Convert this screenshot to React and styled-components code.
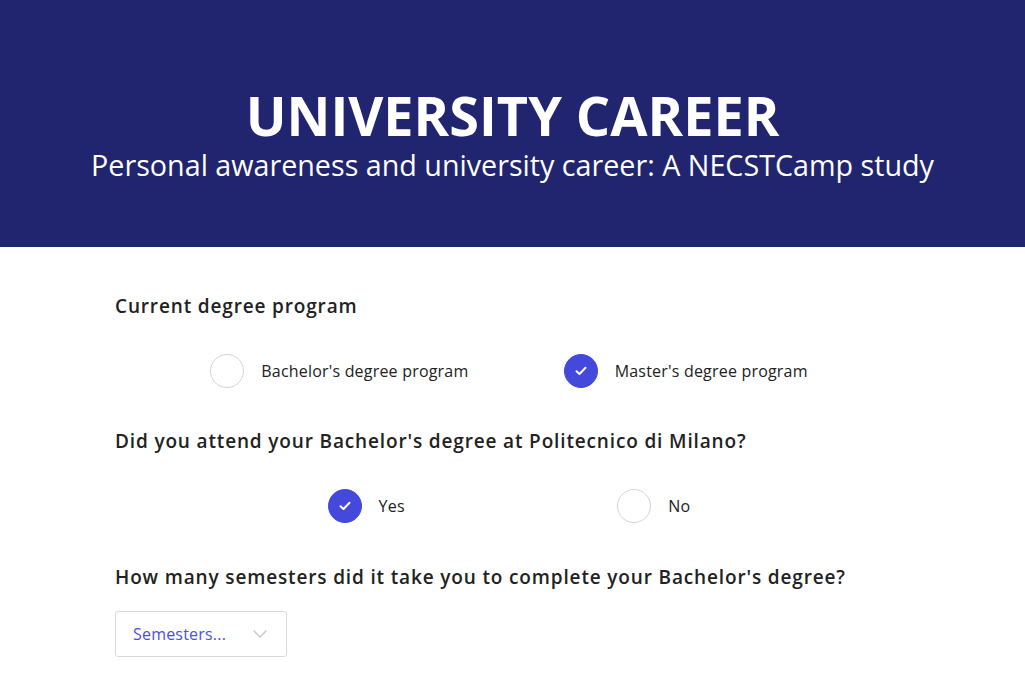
import styled, { createGlobalStyle } from "styled-components";

const GlobalStyle = createGlobalStyle`
  body {
    margin: 0;
    background: #ffffff;
    font-family: "Open Sans", "Noto Sans", sans-serif;
    color: #222222;
  }
`;

const Hero = styled.header`
  height: 247px;
  background: #21246e;
  color: #ffffff;
  display: flex;
  flex-direction: column;
  align-items: center;
  text-align: center;
  padding-top: 87px;
  box-sizing: border-box;
`;

const Title = styled.h1`
  margin: 0;
  font-size: 54px;
  line-height: 56px;
  font-weight: 700;
`;

const Subtitle = styled.p`
  margin: 2px 0 0;
  font-size: 28.7px;
  line-height: 40px;
  font-weight: 400;
`;

const Form = styled.main`
  width: 788px;
  margin-left: 115px;
  padding-top: 47px;
`;

const Question = styled.div`
  margin-bottom: ${(p) => p.$gap || 41}px;
`;

const Label = styled.h2`
  margin: 0 0 ${(p) => p.$after || 36}px;
  font-size: 19px;
  line-height: 24px;
  font-weight: 600;
  letter-spacing: 0.85px;
  color: #222222;
`;

const Options = styled.div`
  display: flex;
  justify-content: space-evenly;
  align-items: center;
`;

const Option = styled.label`
  display: flex;
  align-items: center;
  gap: 17px;
  font-size: 16px;
  letter-spacing: 0.2px;
  color: #222222;
  cursor: pointer;
`;

const Radio = styled.span`
  width: 34px;
  height: 34px;
  border-radius: 50%;
  box-sizing: border-box;
  border: 1px solid ${(p) => (p.$checked ? "#4449dc" : "#d6d6d6")};
  background: ${(p) => (p.$checked ? "#4449dc" : "#ffffff")};
  display: flex;
  align-items: center;
  justify-content: center;
`;

const Select = styled.div`
  width: 172px;
  height: 46px;
  box-sizing: border-box;
  border: 1px solid #dadade;
  border-radius: 3px;
  display: flex;
  align-items: center;
  justify-content: space-between;
  padding: 0 19px 0 17px;
  font-size: 16px;
  letter-spacing: 0.2px;
  color: #4b4fe0;
`;

const Check = () => (
  <svg width="12" height="10" viewBox="0 0 12 10" fill="none">
    <path d="M1.5 5.2 L4.5 8 L10.5 1.8" stroke="#fff" strokeWidth="2" strokeLinecap="round" strokeLinejoin="round" />
  </svg>
);

const Chevron = () => (
  <svg width="14" height="8" viewBox="0 0 14 8" fill="none">
    <path d="M1 1 L7 7 L13 1" stroke="#c9c9cc" strokeWidth="1.5" strokeLinecap="round" strokeLinejoin="round" />
  </svg>
);

const Choice = ({ checked, children }) => (
  <Option>
    <Radio $checked={checked}>{checked && <Check />}</Radio>
    {children}
  </Option>
);

export default function App() {
  return (
    <>
      <GlobalStyle />
      <Hero>
        <Title>UNIVERSITY CAREER</Title>
        <Subtitle>Personal awareness and university career: A NECSTCamp study</Subtitle>
      </Hero>
      <Form>
        <Question>
          <Label>Current degree program</Label>
          <Options>
            <Choice>Bachelor's degree program</Choice>
            <Choice checked>Master's degree program</Choice>
          </Options>
        </Question>
        <Question $gap={42}>
          <Label>Did you attend your Bachelor's degree at Politecnico di Milano?</Label>
          <Options>
            <Choice checked>Yes</Choice>
            <Choice>No</Choice>
          </Options>
        </Question>
        <Question $gap={20}>
          <Label $after={22}>How many semesters did it take you to complete your Bachelor's degree?</Label>
          <Select>
            Semesters...
            <Chevron />
          </Select>
        </Question>
      </Form>
    </>
  );
}
